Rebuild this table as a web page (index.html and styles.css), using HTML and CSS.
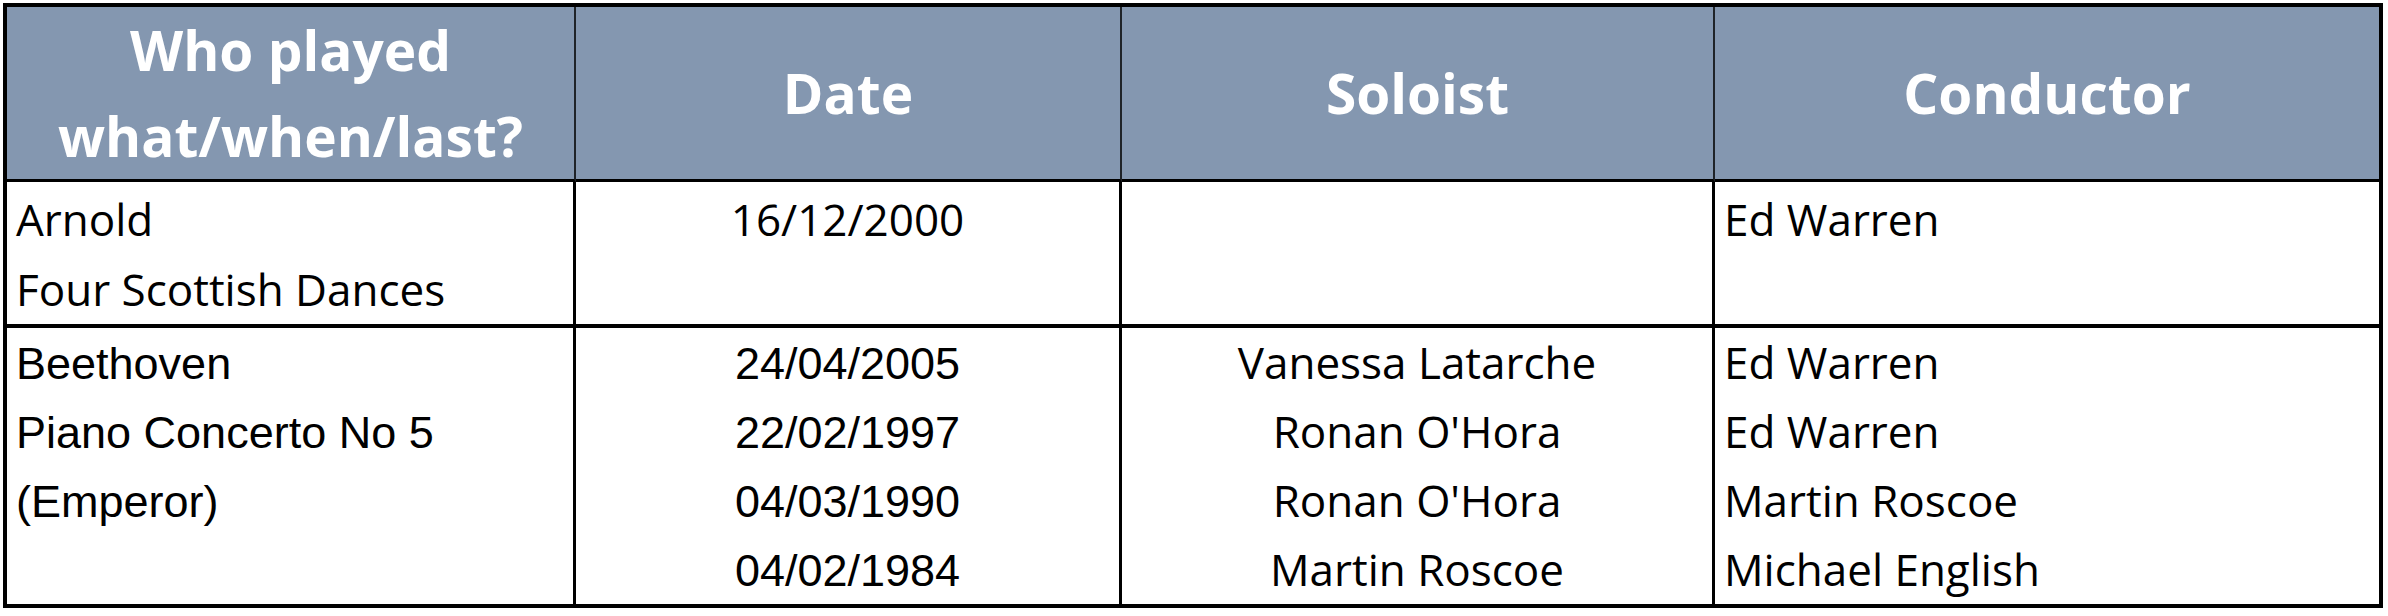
FILE: index.html
```html
<!DOCTYPE html>
<html>
<head>
<meta charset="utf-8">
<link rel="stylesheet" href="styles.css">
</head>
<body>
<table class="grid">
  <colgroup>
    <col class="c1"><col class="c2"><col class="c3"><col class="c4">
  </colgroup>
  <thead>
    <tr>
      <th>Who played<br>what/when/last?</th>
      <th>Date</th>
      <th>Soloist</th>
      <th class="last">Conductor</th>
    </tr>
  </thead>
  <tbody>
    <tr class="r1">
      <td><div class="ln">Arnold</div><div class="ln">Four Scottish Dances</div></td>
      <td class="mid"><div class="ln">16/12/2000</div></td>
      <td class="mid"></td>
      <td class="last"><div class="ln">Ed Warren</div></td>
    </tr>
    <tr class="r2">
      <td>
        <div class="ln"><span class="ar">Beethoven</span></div>
        <div class="ln"><span class="ar">Piano Concerto No 5</span></div>
        <div class="ln"><span class="ar">(Emperor)</span></div>
      </td>
      <td class="mid">
        <div class="ln"><span class="ar">24/04/2005</span></div>
        <div class="ln"><span class="ar">22/02/1997</span></div>
        <div class="ln"><span class="ar">04/03/1990</span></div>
        <div class="ln"><span class="ar">04/02/1984</span></div>
      </td>
      <td class="mid">
        <div class="ln">Vanessa Latarche</div>
        <div class="ln">Ronan O'Hora</div>
        <div class="ln">Ronan O'Hora</div>
        <div class="ln">Martin Roscoe</div>
      </td>
      <td class="last">
        <div class="ln">Ed Warren</div>
        <div class="ln">Ed Warren</div>
        <div class="ln">Martin Roscoe</div>
        <div class="ln">Michael English</div>
      </td>
    </tr>
  </tbody>
</table>
</body>
</html>
```

FILE: styles.css
```css
html, body {
  margin: 0;
  padding: 0;
  background: #ffffff;
}

body {
  padding: 3px;
  font-family: "Open Sans", "Noto Sans", sans-serif;
  color: #000;
}

.grid {
  border: 4px solid #000;
  border-collapse: separate;
  border-spacing: 0;
  table-layout: fixed;
  width: 2380px;
}

.c1 { width: 569px; }
.c2 { width: 546px; }
.c3 { width: 593px; }
.c4 { width: 664px; }

.grid th {
  box-sizing: border-box;
  background: #8497b0;
  color: #fff;
  font-weight: 700;
  font-size: 55px;
  line-height: 86px;
  text-align: center;
  vertical-align: middle;
  padding: 0;
  border-right: 2px solid #1f2328;
  border-bottom: 3px solid #000;
}

.grid td {
  box-sizing: border-box;
  font-size: 44px;
  vertical-align: top;
  padding: 0 9px;
  border-right: 3px solid #000;
}

.grid th.last,
.grid td.last {
  border-right: none;
}

.grid td.mid {
  text-align: center;
}

.r1 td {
  padding-top: 2px;
  height: 142px;
  border-bottom: 4px solid #000;
}

.r1 .ln {
  line-height: 70px;
}

.r2 .ln {
  line-height: 69px;
}

.ln {
  white-space: nowrap;
}

.ar {
  font-family: "Liberation Sans", Arial, sans-serif;
  font-size: 45px;
  line-height: 1;
}
```
